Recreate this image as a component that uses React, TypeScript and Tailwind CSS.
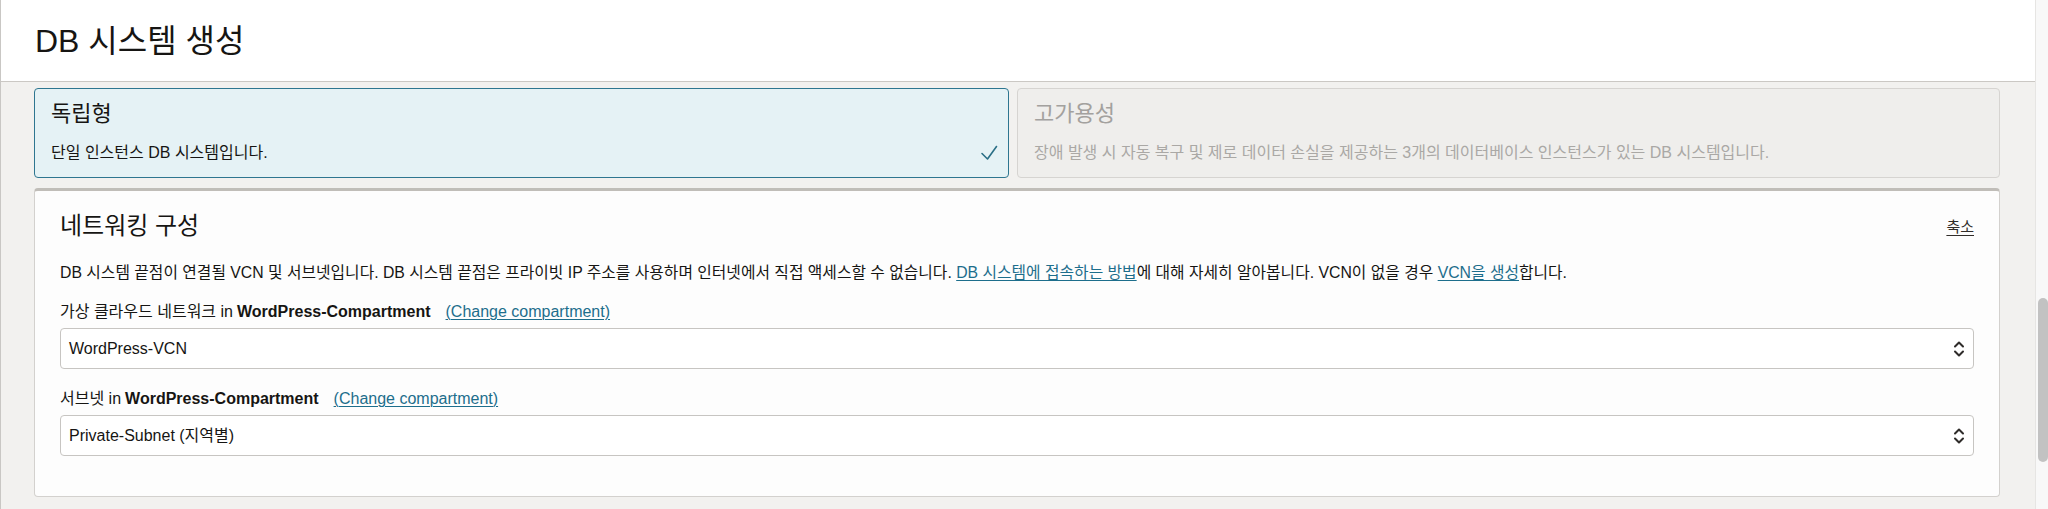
import { ReactNode } from 'react';

const font = "font-['Liberation_Sans','Noto_Sans_CJK_KR',sans-serif]";

function Chevrons() {
  return (
    <svg width="12" height="18" viewBox="0 0 12 18" fill="none" stroke="#2f2c2a" strokeWidth={2} strokeLinecap="round" strokeLinejoin="round">
      <path d="M2 6.5 6 2.5l4 4" />
      <path d="M2 11.5l4 4 4-4" />
    </svg>
  );
}

function Check() {
  return (
    <svg width="18" height="16" viewBox="0 0 18 16" fill="none" stroke="#2a6f86" strokeWidth={1.6} strokeLinecap="round" strokeLinejoin="round">
      <path d="M2 8.5 7.5 14 16.5 1.5" />
    </svg>
  );
}

function Link({ children }: { children: ReactNode }) {
  return <a className="text-[#1d6e8c] underline underline-offset-2 decoration-1">{children}</a>;
}

function SelectBox({ value }: { value: string }) {
  return (
    <div className="h-[41px] flex items-center justify-between bg-white border border-[#c7c5c2] rounded-[4px] pl-2 pr-[8px]">
      <span className="text-[16px] text-[#161513]">{value}</span>
      <Chevrons />
    </div>
  );
}

function FieldLabel({ name }: { name: string }) {
  return (
    <div className="h-5 flex items-center text-[16px] text-[#161513] leading-5">
      <span>{name} in </span>
      <b className="ml-[4px] font-bold">WordPress-Compartment</b>
      <span className="ml-[15px]">
        <Link>(Change compartment)</Link>
      </span>
    </div>
  );
}

export default function App() {
  return (
    <div className={`${font} flex w-full h-[509px] bg-[#f2f1ef] border-l border-[#c9c7c4] overflow-hidden text-[#161513]`}>
      <div className="flex-1 flex flex-col">
        <header className="h-[82px] shrink-0 bg-white border-b border-[#cbc8c4] flex items-center pl-[34px] pt-[1px]">
          <h1 className="text-[32px] leading-none text-[#161513]">DB 시스템 생성</h1>
        </header>

        <main className="pl-[33px] pr-[35px] pt-[6px]">
          <div className="grid grid-cols-[975fr_983fr] gap-[8px]">
            <div className="h-[90px] flex flex-col bg-[#e5f2f5] border border-[#2e7690] rounded-[4px] pl-4 pr-[10px] pt-[11px]">
              <div className="text-[22px] leading-7">독립형</div>
              <div className="mt-[15px] flex items-center justify-between">
                <span className="text-[16px] leading-5">단일 인스턴스 DB 시스템입니다.</span>
                <Check />
              </div>
            </div>
            <div className="h-[90px] flex flex-col bg-[#efeeec] border border-[#d6d4d1] rounded-[4px] pl-4 pr-[10px] pt-[11px]">
              <div className="text-[22px] leading-7 text-[#a3a19e]">고가용성</div>
              <div className="mt-[15px] text-[16px] leading-5 text-[#aaa8a5]">
                장애 발생 시 자동 복구 및 제로 데이터 손실을 제공하는 3개의 데이터베이스 인스턴스가 있는 DB 시스템입니다.
              </div>
            </div>
          </div>

          <section className="mt-[10px] bg-[#fdfdfd] border border-[#d3d1ce] border-t-[3px] border-t-[#c0bdb8] rounded-[4px] px-[25px] pt-[20px] pb-[40px]">
            <div className="h-[30px] flex items-center justify-between">
              <h2 className="text-[24px] leading-[30px]">네트워킹 구성</h2>
              <a className="text-[15px] text-[#312d2a] underline underline-offset-[3px] decoration-1 pt-[2px]">축소</a>
            </div>
            <p className="mt-[22px] text-[15.8px] leading-5">
              DB 시스템 끝점이 연결될 VCN 및 서브넷입니다. DB 시스템 끝점은 프라이빗 IP 주소를 사용하며 인터넷에서 직접 액세스할 수 없습니다.{' '}
              <Link>DB 시스템에 접속하는 방법</Link>에 대해 자세히 알아봅니다. VCN이 없을 경우 <Link>VCN을 생성</Link>합니다.
            </p>

            <div className="mt-[19px] flex flex-col gap-[6px]">
              <FieldLabel name="가상 클라우드 네트워크" />
              <SelectBox value="WordPress-VCN" />
            </div>
            <div className="mt-[20px] flex flex-col gap-[6px]">
              <FieldLabel name="서브넷" />
              <SelectBox value="Private-Subnet (지역별)" />
            </div>
          </section>
        </main>
      </div>

      <div className="w-[13px] shrink-0 bg-[#f8f8f8] border-l border-[#e6e5e3] flex flex-col">
        <div className="h-[298px]" />
        <div className="ml-[2px] w-[10px] h-[164px] rounded-full bg-[#c2c2c2]" />
      </div>
    </div>
  );
}
